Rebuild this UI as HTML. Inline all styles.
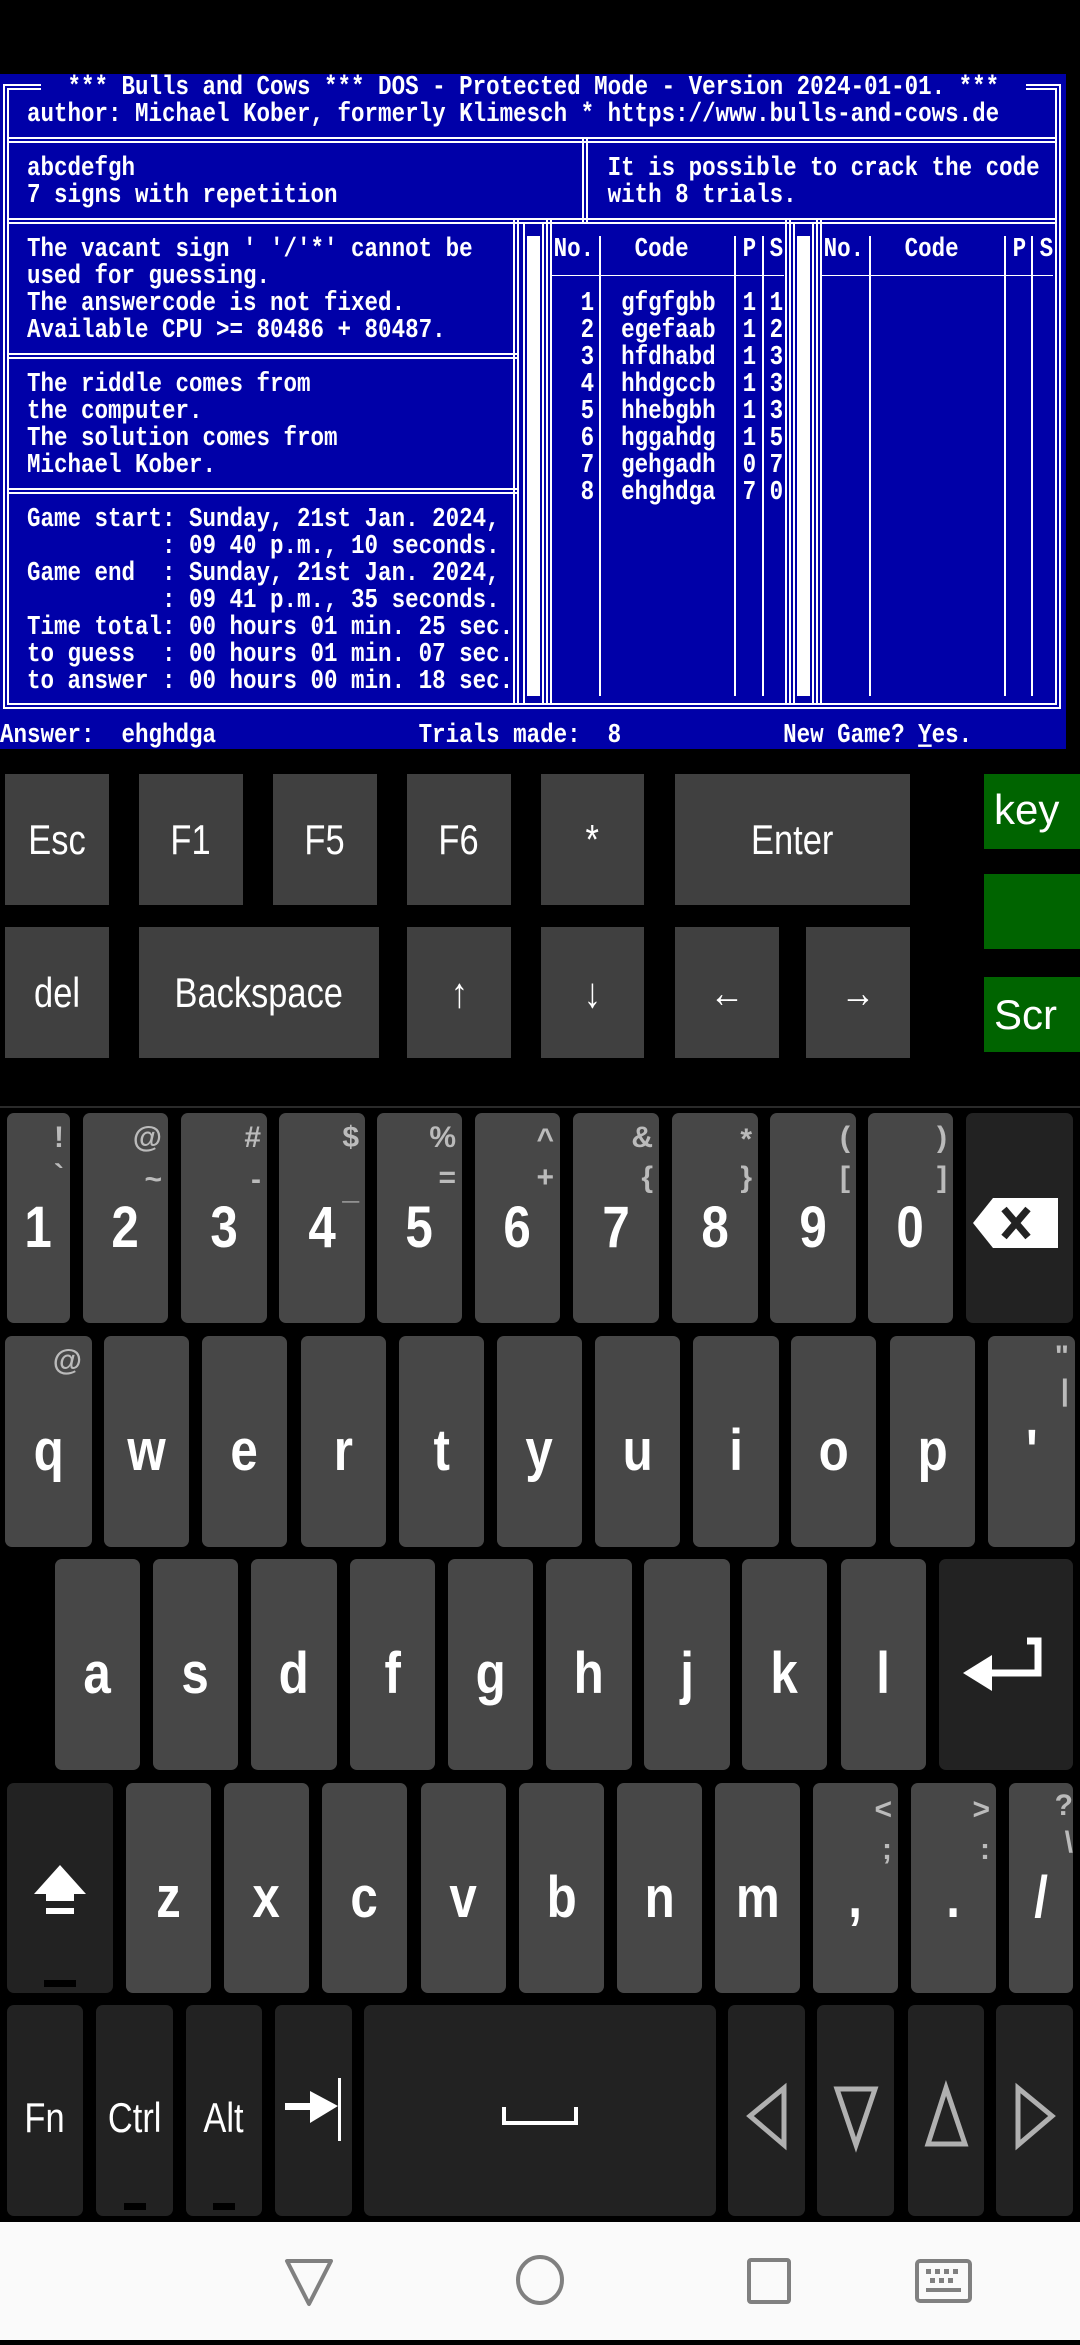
<!DOCTYPE html>
<html><head><meta charset="utf-8">
<style>
*{margin:0;padding:0;box-sizing:border-box}
body{width:1080px;height:2340px;background:#000;position:relative;overflow:hidden;font-family:"Liberation Sans",sans-serif}
.dos{position:absolute;left:0;top:74px;width:1066px;height:675px;background:#0000a8;overflow:hidden}
.r{position:absolute;left:0;height:27px;line-height:27px;font-family:"Liberation Mono",monospace;font-weight:bold;font-size:22.5px;color:#fff;white-space:pre;transform:scaleY(1.2);transform-origin:50% 50%}
.l{position:absolute;background:#fff}
.ck{position:absolute;background:#404040;color:#fff;font-size:42px;display:flex;align-items:center;justify-content:center}
.ck span{display:inline-block;transform:scaleX(.82)}
.gk{position:absolute;background:#006400;color:#fff;font-size:42px;left:984px;width:96px;height:75px}
.k{position:absolute;background:#474747;border-radius:7px;color:#fff}
.d{background:#222}
.m{position:absolute;left:0;right:0;top:86px;text-align:center;font-weight:bold;font-size:58px;line-height:58px}
.m span{display:inline-block;transform:scaleX(.85)}
.h{position:absolute;right:6px;color:#bbb;font-weight:bold;font-size:30px;line-height:30px}
.b{position:absolute;left:0;right:0;top:92px;text-align:center;color:#fff;font-size:42px;line-height:42px}
.b span{display:inline-block;transform:scaleX(.82)}
.ind{position:absolute;bottom:6px;left:50%;margin-left:-16px;width:32px;height:7px;background:#000}
</style></head><body>
<div class="dos">
<div class="r" style="top:0">     *** Bulls and Cows *** DOS - Protected Mode - Version 2024-01-01. ***</div>
<div class="r" style="top:27px">  author: Michael Kober, formerly Klimesch * https://www.bulls-and-cows.de</div>
<div class="r" style="top:81px">  abcdefgh                                   It is possible to crack the code</div>
<div class="r" style="top:108px">  7 signs with repetition                    with 8 trials.</div>
<div class="r" style="top:162px">  The vacant sign ' '/'*' cannot be      No.   Code    P S   No.   Code    P S</div>
<div class="r" style="top:189px">  used for guessing.</div>
<div class="r" style="top:216px">  The answercode is not fixed.             1  gfgfgbb  1 1</div>
<div class="r" style="top:243px">  Available CPU >= 80486 + 80487.          2  egefaab  1 2</div>
<div class="r" style="top:270px">                                           3  hfdhabd  1 3</div>
<div class="r" style="top:297px">  The riddle comes from                    4  hhdgccb  1 3</div>
<div class="r" style="top:324px">  the computer.                            5  hhebgbh  1 3</div>
<div class="r" style="top:351px">  The solution comes from                  6  hggahdg  1 5</div>
<div class="r" style="top:378px">  Michael Kober.                           7  gehgadh  0 7</div>
<div class="r" style="top:405px">                                           8  ehghdga  7 0</div>
<div class="r" style="top:432px">  Game start: Sunday, 21st Jan. 2024,</div>
<div class="r" style="top:459px">            : 09 40 p.m., 10 seconds.</div>
<div class="r" style="top:486px">  Game end  : Sunday, 21st Jan. 2024,</div>
<div class="r" style="top:513px">            : 09 41 p.m., 35 seconds.</div>
<div class="r" style="top:540px">  Time total: 00 hours 01 min. 25 sec.</div>
<div class="r" style="top:567px">  to guess  : 00 hours 01 min. 07 sec.</div>
<div class="r" style="top:594px">  to answer : 00 hours 00 min. 18 sec.</div>
<div class="r" style="top:648px">Answer:  ehghdga               Trials made:  8            New Game? <u>Y</u>es.</div>

<div class="l" style="left:3px;top:10px;width:2px;height:625px"></div>
<div class="l" style="left:7px;top:14px;width:2px;height:617px"></div>
<div class="l" style="left:1059px;top:10px;width:2px;height:625px"></div>
<div class="l" style="left:1055px;top:14px;width:2px;height:617px"></div>
<div class="l" style="left:3px;top:10px;width:38px;height:2px"></div>
<div class="l" style="left:7px;top:14px;width:34px;height:2px"></div>
<div class="l" style="left:1026px;top:10px;width:35px;height:2px"></div>
<div class="l" style="left:1026px;top:14px;width:31px;height:2px"></div>
<div class="l" style="left:3px;top:633px;width:1058px;height:2px"></div>
<div class="l" style="left:7px;top:629px;width:1050px;height:2px"></div>
<div class="l" style="left:7px;top:63px;width:1050px;height:2px"></div>
<div class="l" style="left:7px;top:67px;width:1050px;height:2px"></div>
<div class="l" style="left:7px;top:144px;width:1050px;height:2px"></div>
<div class="l" style="left:7px;top:148px;width:1050px;height:2px"></div>
<div class="l" style="left:7px;top:279px;width:512px;height:2px"></div>
<div class="l" style="left:7px;top:283px;width:512px;height:2px"></div>
<div class="l" style="left:7px;top:414px;width:512px;height:2px"></div>
<div class="l" style="left:7px;top:418px;width:512px;height:2px"></div>
<div class="l" style="left:582px;top:65px;width:2px;height:83px"></div>
<div class="l" style="left:586px;top:65px;width:2px;height:83px"></div>
<div class="l" style="left:513px;top:146px;width:2px;height:485px"></div>
<div class="l" style="left:517px;top:146px;width:2px;height:485px"></div>
<div class="l" style="left:523px;top:148px;width:2px;height:483px"></div>
<div class="l" style="left:527px;top:162px;width:13px;height:460px"></div>
<div class="l" style="left:542px;top:148px;width:2px;height:483px"></div>
<div class="l" style="left:546px;top:146px;width:2px;height:485px"></div>
<div class="l" style="left:550px;top:146px;width:2px;height:485px"></div>
<div class="l" style="left:785px;top:146px;width:2px;height:485px"></div>
<div class="l" style="left:789px;top:146px;width:2px;height:485px"></div>
<div class="l" style="left:793px;top:148px;width:2px;height:483px"></div>
<div class="l" style="left:797px;top:162px;width:13px;height:460px"></div>
<div class="l" style="left:812px;top:148px;width:2px;height:483px"></div>
<div class="l" style="left:816px;top:146px;width:2px;height:485px"></div>
<div class="l" style="left:820px;top:146px;width:2px;height:485px"></div>
<div class="l" style="left:599px;top:162px;width:2px;height:460px"></div>
<div class="l" style="left:734px;top:162px;width:2px;height:460px"></div>
<div class="l" style="left:762px;top:162px;width:2px;height:460px"></div>
<div class="l" style="left:869px;top:162px;width:2px;height:460px"></div>
<div class="l" style="left:1004px;top:162px;width:2px;height:460px"></div>
<div class="l" style="left:1031px;top:162px;width:2px;height:460px"></div>
<div class="l" style="left:552px;top:201px;width:232px;height:1px"></div>
<div class="l" style="left:822px;top:201px;width:231px;height:1px"></div>
</div>

<div class="ck" style="left:5px;top:774px;width:104px;height:131px"><span>Esc</span></div>
<div class="ck" style="left:139px;top:774px;width:104px;height:131px"><span>F1</span></div>
<div class="ck" style="left:273px;top:774px;width:104px;height:131px"><span>F5</span></div>
<div class="ck" style="left:407px;top:774px;width:104px;height:131px"><span>F6</span></div>
<div class="ck" style="left:541px;top:774px;width:103px;height:131px"><span>*</span></div>
<div class="ck" style="left:675px;top:774px;width:235px;height:131px"><span>Enter</span></div>
<div class="ck" style="left:5px;top:927px;width:104px;height:131px"><span>del</span></div>
<div class="ck" style="left:139px;top:927px;width:240px;height:131px"><span>Backspace</span></div>
<div class="ck" style="left:407px;top:927px;width:104px;height:131px"><span>↑</span></div>
<div class="ck" style="left:541px;top:927px;width:103px;height:131px"><span>↓</span></div>
<div class="ck" style="left:675px;top:927px;width:104px;height:131px"><span>←</span></div>
<div class="ck" style="left:806px;top:927px;width:104px;height:131px"><span>→</span></div>
<div class="gk" style="top:774px"><span style="position:absolute;left:10px;top:12px">key</span></div>
<div class="gk" style="top:874px"></div>
<div class="gk" style="top:977px"><span style="position:absolute;left:10px;top:14px">Scr</span></div>

<div style="position:absolute;left:0;top:1106px;width:1080px;height:2px;background:#2a2a2a"></div>

<div class="k" style="left:7px;top:1113px;width:63px;height:210px"><div class="h" style="top:10px">!</div><div class="h" style="top:48px">`</div><div class="m"><span>1</span></div></div>
<div class="k" style="left:83px;top:1113px;width:85px;height:210px"><div class="h" style="top:10px">@</div><div class="h" style="top:52px">~</div><div class="m"><span>2</span></div></div>
<div class="k" style="left:181px;top:1113px;width:86px;height:210px"><div class="h" style="top:10px">#</div><div class="h" style="top:52px">-</div><div class="m"><span>3</span></div></div>
<div class="k" style="left:279px;top:1113px;width:86px;height:210px"><div class="h" style="top:10px">$</div><div class="h" style="top:62px">_</div><div class="m"><span>4</span></div></div>
<div class="k" style="left:377px;top:1113px;width:85px;height:210px"><div class="h" style="top:10px">%</div><div class="h" style="top:50px">=</div><div class="m"><span>5</span></div></div>
<div class="k" style="left:475px;top:1113px;width:85px;height:210px"><div class="h" style="top:12px">^</div><div class="h" style="top:50px">+</div><div class="m"><span>6</span></div></div>
<div class="k" style="left:573px;top:1113px;width:86px;height:210px"><div class="h" style="top:10px">&amp;</div><div class="h" style="top:50px">{</div><div class="m"><span>7</span></div></div>
<div class="k" style="left:672px;top:1113px;width:86px;height:210px"><div class="h" style="top:12px">*</div><div class="h" style="top:50px">}</div><div class="m"><span>8</span></div></div>
<div class="k" style="left:770px;top:1113px;width:86px;height:210px"><div class="h" style="top:10px">(</div><div class="h" style="top:50px">[</div><div class="m"><span>9</span></div></div>
<div class="k" style="left:868px;top:1113px;width:85px;height:210px"><div class="h" style="top:10px">)</div><div class="h" style="top:50px">]</div><div class="m"><span>0</span></div></div>
<div class="k d" style="left:966px;top:1113px;width:107px;height:210px">
<svg style="position:absolute;left:0;top:0" width="107" height="210"><path d="M7 110 L27 85 L92 85 L92 135 L27 135 Z" fill="#fff"/><path d="M38 96 L62 124 M62 96 L38 124" stroke="#222" stroke-width="7"/></svg></div>

<div class="k" style="left:5px;top:1336px;width:87px;height:211px"><div class="h" style="top:10px;right:10px">@</div><div class="m"><span>q</span></div></div>
<div class="k" style="left:104px;top:1336px;width:85px;height:211px"><div class="m"><span>w</span></div></div>
<div class="k" style="left:202px;top:1336px;width:85px;height:211px"><div class="m"><span>e</span></div></div>
<div class="k" style="left:301px;top:1336px;width:85px;height:211px"><div class="m"><span>r</span></div></div>
<div class="k" style="left:399px;top:1336px;width:85px;height:211px"><div class="m"><span>t</span></div></div>
<div class="k" style="left:497px;top:1336px;width:85px;height:211px"><div class="m"><span>y</span></div></div>
<div class="k" style="left:595px;top:1336px;width:85px;height:211px"><div class="m"><span>u</span></div></div>
<div class="k" style="left:693px;top:1336px;width:86px;height:211px"><div class="m"><span>i</span></div></div>
<div class="k" style="left:791px;top:1336px;width:85px;height:211px"><div class="m"><span>o</span></div></div>
<div class="k" style="left:890px;top:1336px;width:85px;height:211px"><div class="m"><span>p</span></div></div>
<div class="k" style="left:988px;top:1336px;width:87px;height:211px"><div class="h" style="top:6px">"</div><div class="h" style="top:40px">|</div><div class="m"><span>'</span></div></div>

<div class="k" style="left:55px;top:1559px;width:85px;height:211px"><div class="m"><span>a</span></div></div>
<div class="k" style="left:153px;top:1559px;width:85px;height:211px"><div class="m"><span>s</span></div></div>
<div class="k" style="left:251px;top:1559px;width:86px;height:211px"><div class="m"><span>d</span></div></div>
<div class="k" style="left:350px;top:1559px;width:85px;height:211px"><div class="m"><span>f</span></div></div>
<div class="k" style="left:448px;top:1559px;width:85px;height:211px"><div class="m"><span>g</span></div></div>
<div class="k" style="left:546px;top:1559px;width:86px;height:211px"><div class="m"><span>h</span></div></div>
<div class="k" style="left:644px;top:1559px;width:86px;height:211px"><div class="m"><span>j</span></div></div>
<div class="k" style="left:742px;top:1559px;width:85px;height:211px"><div class="m"><span>k</span></div></div>
<div class="k" style="left:841px;top:1559px;width:85px;height:211px"><div class="m"><span>l</span></div></div>
<div class="k d" style="left:939px;top:1559px;width:134px;height:211px">
<svg style="position:absolute;left:0;top:0" width="134" height="211"><path d="M24 114 L53 96 L53 132 Z" fill="#fff"/><path d="M50 114 L99 114 L99 82 L88 82" stroke="#fff" stroke-width="7" fill="none"/></svg></div>

<div class="k d" style="left:7px;top:1783px;width:106px;height:210px">
<svg style="position:absolute;left:0;top:0" width="106" height="210"><path d="M53 82 L79 111 L67 111 L67 118 L39 118 L39 111 L27 111 Z" fill="#fff"/><rect x="39" y="125" width="28" height="6" fill="#fff"/></svg><div class="ind"></div></div>
<div class="k" style="left:126px;top:1783px;width:85px;height:210px"><div class="m"><span>z</span></div></div>
<div class="k" style="left:224px;top:1783px;width:85px;height:210px"><div class="m"><span>x</span></div></div>
<div class="k" style="left:322px;top:1783px;width:85px;height:210px"><div class="m"><span>c</span></div></div>
<div class="k" style="left:421px;top:1783px;width:85px;height:210px"><div class="m"><span>v</span></div></div>
<div class="k" style="left:519px;top:1783px;width:85px;height:210px"><div class="m"><span>b</span></div></div>
<div class="k" style="left:617px;top:1783px;width:85px;height:210px"><div class="m"><span>n</span></div></div>
<div class="k" style="left:715px;top:1783px;width:85px;height:210px"><div class="m"><span>m</span></div></div>
<div class="k" style="left:813px;top:1783px;width:85px;height:210px"><div class="h" style="top:12px">&lt;</div><div class="h" style="top:52px">;</div><div class="m"><span>,</span></div></div>
<div class="k" style="left:911px;top:1783px;width:85px;height:210px"><div class="h" style="top:12px">&gt;</div><div class="h" style="top:52px">:</div><div class="m"><span>.</span></div></div>
<div class="k" style="left:1009px;top:1783px;width:64px;height:210px"><div class="h" style="top:8px;right:0">?</div><div class="h" style="top:45px;right:0">\</div><div class="m"><span>/</span></div></div>

<div class="k d" style="left:7px;top:2005px;width:76px;height:211px"><div class="b"><span>Fn</span></div></div>
<div class="k d" style="left:96px;top:2005px;width:77px;height:211px"><div class="b"><span>Ctrl</span></div><div class="ind" style="width:22px;margin-left:-11px"></div></div>
<div class="k d" style="left:186px;top:2005px;width:76px;height:211px"><div class="b"><span>Alt</span></div><div class="ind" style="width:22px;margin-left:-11px"></div></div>
<div class="k d" style="left:275px;top:2005px;width:77px;height:211px">
<svg style="position:absolute;left:0;top:0" width="77" height="211"><rect x="10" y="98" width="28" height="7" fill="#fff"/><path d="M35 86 L63 101 L35 118 Z" fill="#fff"/><rect x="63" y="73" width="3" height="63" fill="#fff"/></svg></div>
<div class="k d" style="left:364px;top:2005px;width:352px;height:211px">
<svg style="position:absolute;left:0;top:0" width="352" height="211"><path d="M140 102 L140 118 L212 118 L212 102" stroke="#fff" stroke-width="4" fill="none"/></svg></div>
<div class="k d" style="left:728px;top:2005px;width:77px;height:211px">
<svg style="position:absolute;left:0;top:0" width="77" height="211"><path d="M56 83 L22 111 L56 140 Z" stroke="#b0b0b0" stroke-width="5" fill="none"/></svg></div>
<div class="k d" style="left:817px;top:2005px;width:77px;height:211px">
<svg style="position:absolute;left:0;top:0" width="77" height="211"><path d="M20 84 L58 84 L39 140 Z" stroke="#b0b0b0" stroke-width="5" fill="none"/></svg></div>
<div class="k d" style="left:908px;top:2005px;width:76px;height:211px">
<svg style="position:absolute;left:0;top:0" width="76" height="211"><path d="M38 83 L20 139 L57 139 Z" stroke="#b0b0b0" stroke-width="5" fill="none"/></svg></div>
<div class="k d" style="left:996px;top:2005px;width:77px;height:211px">
<svg style="position:absolute;left:0;top:0" width="77" height="211"><path d="M22 83 L56 111 L22 140 Z" stroke="#b0b0b0" stroke-width="5" fill="none"/></svg></div>

<div style="position:absolute;left:0;top:2222px;width:1080px;height:118px;background:#fafafa">
<svg width="1080" height="118">
<path d="M287 39 L331 39 L309 82 Z" stroke="#808080" stroke-width="4" fill="none" stroke-linejoin="round"/>
<ellipse cx="540" cy="58" rx="22" ry="23" stroke="#808080" stroke-width="4" fill="none"/>
<rect x="749" y="38" width="40" height="42" rx="2" stroke="#808080" stroke-width="4" fill="none"/>
<rect x="917" y="39" width="53" height="40" rx="3" stroke="#808080" stroke-width="4" fill="none"/>
<g fill="#808080"><rect x="926" y="47" width="5" height="5"/><rect x="935" y="47" width="5" height="5"/><rect x="944" y="47" width="5" height="5"/><rect x="953" y="47" width="5" height="5"/><rect x="930" y="56" width="5" height="5"/><rect x="939" y="56" width="5" height="5"/><rect x="948" y="56" width="5" height="5"/><rect x="926" y="66" width="35" height="4"/></g>
</svg></div>
</body></html>
